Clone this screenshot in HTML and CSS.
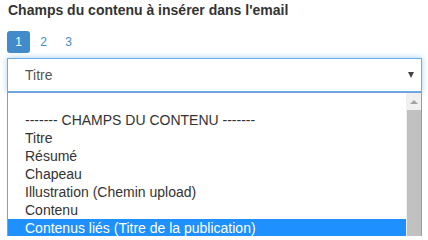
FILE: index.html
```html
<!DOCTYPE html>
<html lang="fr">
<head>
<meta charset="utf-8">
<link rel="stylesheet" href="styles.css">
</head>
<body>
<div class="field">
  <label class="field-label">Champs du contenu à insérer dans l'email</label>
  <ul class="pagination">
    <li class="page active">1</li>
    <li class="page">2</li>
    <li class="page">3</li>
  </ul>
  <div class="select">
    <div class="select-box">
      <span class="select-value">Titre</span>
      <span class="select-arrow"></span>
    </div>
    <div class="dropdown">
      <ul class="options">
        <li class="option">&nbsp;</li>
        <li class="option">------- CHAMPS DU CONTENU -------</li>
        <li class="option">Titre</li>
        <li class="option">Résumé</li>
        <li class="option">Chapeau</li>
        <li class="option">Illustration (Chemin upload)</li>
        <li class="option">Contenu</li>
        <li class="option selected">Contenus liés (Titre de la publication)</li>
      </ul>
      <div class="scrollbar">
        <span class="scroll-up"></span>
        <span class="scroll-thumb"></span>
      </div>
    </div>
  </div>
</div>
</body>
</html>
```

FILE: styles.css
```css
html, body {
  margin: 0;
  padding: 0;
  background: #fff;
  overflow: hidden;
}
body {
  font-family: "Liberation Sans", Arial, sans-serif;
  color: #333;
  height: 236px;
}
.field {
  padding: 0 6px 0 7px;
}
.field-label {
  display: block;
  font-weight: bold;
  font-size: 14px;
  line-height: 20px;
  padding: 0 0 0 1px;
  margin: 0;
  color: #333;
}
.pagination {
  list-style: none;
  margin: 11px 0 0;
  padding: 0;
  display: flex;
  align-items: center;
  gap: 2px;
}
.page {
  font-size: 12px;
  line-height: 22px;
  height: 22px;
  color: #428bca;
  padding: 0 8px;
  min-width: 7px;
  text-align: center;
}
.page.active {
  background: #428bca;
  color: #fff;
  border-radius: 3px;
}
.select {
  margin-top: 5px;
}
.select-box {
  height: 32px;
  border: 1px solid #66afe9;
  box-shadow: 0 0 6px rgba(102, 175, 233, 0.6);
  display: flex;
  align-items: center;
  justify-content: space-between;
  padding: 0 7px 0 17px;
  background: #fff;
}
.select-value {
  font-size: 14px;
  color: #555;
}
.select-arrow {
  width: 0;
  height: 0;
  border-left: 3.5px solid transparent;
  border-right: 3.5px solid transparent;
  border-top: 6px solid #444;
}
.dropdown {
  display: flex;
  border-left: 1px solid #7a9fd6;
  border-right: 1px solid #7a9fd6;
  border-top: 1px solid #7a9fd6;
  height: 143px;
  overflow: hidden;
  background: #fff;
}
.options {
  list-style: none;
  margin: 0;
  padding: 0;
  flex: 1;
}
.option {
  font-size: 14px;
  line-height: 18px;
  height: 18px;
  padding-left: 17px;
  color: #333;
  white-space: nowrap;
}
.option.selected {
  background: #1e90ff;
  color: #fff;
  height: 17px;
}
.scrollbar {
  width: 15px;
  background: #f0f0f0;
  display: flex;
  flex-direction: column;
  align-items: center;
}
.scroll-up {
  margin-top: 7px;
  width: 0;
  height: 0;
  border-left: 4px solid transparent;
  border-right: 4px solid transparent;
  border-bottom: 4px solid #a3a3a3;
}
.scroll-thumb {
  margin-top: 6px;
  width: 14px;
  flex: 1;
  background: #c1c1c1;
}
```
